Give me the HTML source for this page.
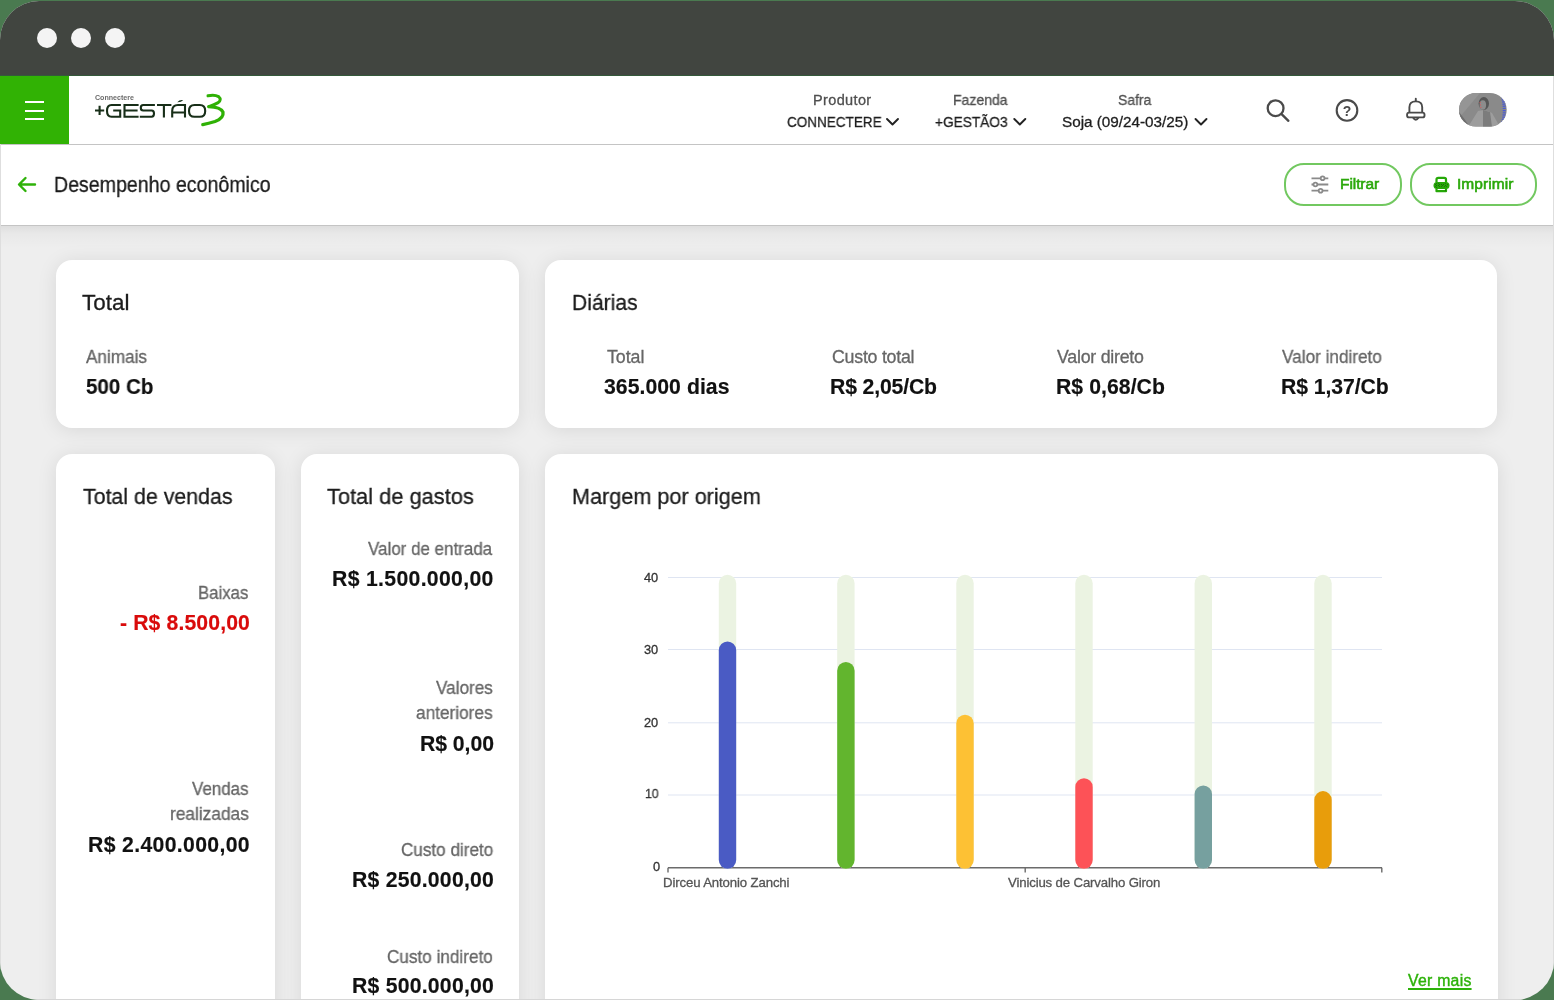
<!DOCTYPE html>
<html><head><meta charset="utf-8">
<style>
html,body{margin:0;padding:0;width:1554px;height:1000px;overflow:hidden;background:#4a7a50;}
body{position:relative;font-family:"Liberation Sans",sans-serif;}
#frame{position:absolute;left:0;top:1px;width:1554px;height:999px;border-radius:39px;overflow:hidden;background:#eeeeee;}
#inner{position:absolute;left:0;top:-1px;width:1554px;height:1000px;}
#topbar{position:absolute;left:0;top:0;width:1554px;height:76px;background:#414540;}
.dot{position:absolute;width:20px;height:20px;border-radius:50%;background:#f4f4f4;top:28px;}
#header{position:absolute;left:0;top:76px;width:1554px;height:68px;background:#ffffff;border-bottom:1px solid #c4c4c4;}
#menu{position:absolute;left:0;top:76px;width:69px;height:68px;background:#31b204;}
.hb{position:absolute;left:25px;width:19px;height:2px;background:#fff;}
#sub{position:absolute;left:0;top:145px;width:1554px;height:80px;background:#fff;border-bottom:1px solid #c4c4c4;}
.card{position:absolute;background:#fff;border-radius:16px;box-shadow:0 2px 20px rgba(0,0,0,0.095);}
.btn{position:absolute;height:39px;border:2px solid #72c860;border-radius:20px;background:#fff;}
.tx{position:absolute;white-space:nowrap;font-family:"Liberation Sans",sans-serif;will-change:transform;}
svg{position:absolute;left:0;top:0;will-change:transform;}
</style></head>
<body>
<div id="frame"><div id="inner">
  <div id="topbar"></div>
  <div class="dot" style="left:37px"></div>
  <div class="dot" style="left:71px"></div>
  <div class="dot" style="left:105px"></div>
  <div style="position:absolute;left:0;top:75px;width:1554px;height:1px;background:#34593a"></div>
  <div id="header"></div>
  <div id="menu">
    <div class="hb" style="top:25px"></div>
    <div class="hb" style="top:34px"></div>
    <div class="hb" style="top:42px"></div>
  </div>
  <div style="position:absolute;left:0;top:226px;width:1554px;height:22px;background:linear-gradient(rgba(0,0,0,0.065),rgba(0,0,0,0.025) 35%,rgba(0,0,0,0))"></div>
  <div id="sub"></div>
  <div class="btn" style="left:1284px;top:163px;width:114px;"></div>
  <div class="btn" style="left:1410px;top:163px;width:123px;"></div>

  <div class="card" style="left:56px;top:260px;width:463px;height:168px"></div>
  <div class="card" style="left:545px;top:260px;width:952px;height:168px"></div>
  <div class="card" style="left:56px;top:454px;width:219px;height:600px"></div>
  <div class="card" style="left:301px;top:454px;width:218px;height:600px"></div>
  <div class="card" style="left:545px;top:454px;width:953px;height:600px"></div>
  <div style="position:absolute;left:0;top:144px;width:1px;height:856px;background:#dedede"></div>
  <div style="position:absolute;left:1553px;top:76px;width:1px;height:924px;background:#dedede"></div>
  <div style="position:absolute;left:0;top:999px;width:1554px;height:1px;background:#d6d6d6"></div>
</div></div>

<!-- page-coordinate svg overlay -->
<svg width="1554" height="1000" viewBox="0 0 1554 1000">
  <!-- logo -->
  <g fill="none" stroke="#172e18" stroke-width="2.1" stroke-linecap="butt">
    <path d="M95,110.5 H104.2 M99.6,105.8 V115"/>
    <path d="M120.9,105 H111.5 Q107,105 107,110.8 Q107,116.8 111.5,116.8 H120.2 V110.5 H113.2"/>
    <path d="M138.6,105 H124.5 V116.8 H138.6 M124.5,110.5 H137.6"/>
    <path d="M154.9,105 H143.2 Q140.8,105 140.8,107.7 Q140.8,110.5 143.2,110.5 H151.6 Q154,110.5 154,113.6 Q154,116.8 151.6,116.8 H139.8"/>
    <path d="M157,105 H171.4 M163.9,105 V117.6"/>
    <path d="M172.2,117.6 V111 Q172.2,105 178,105 H185 V117.6 M172.2,112.5 H185"/>
    <path d="M194.5,105 H199.8 Q205.2,105 205.2,110.9 Q205.2,116.8 199.8,116.8 H194.5 Q189,116.8 189,110.9 Q189,105 194.5,105 Z"/>
  </g>
  <path d="M177.3,102.2 Q179.5,99.6 183.2,100.2 Q181,102.4 177.3,102.2 Z" fill="#15301a"/>
  <g fill="none" stroke="#2fb105" stroke-linecap="round">
    <path d="M208,95.8 Q214.5,94.3 218.6,96.6 Q222,99.6 218.2,102.6 Q213.5,105.2 208.8,106.6" stroke-width="3"/>
    <path d="M208.8,106.6 Q221,107 223,112.2 Q224,118 215,121.5 Q208.5,123.6 202.8,124.6" stroke-width="3.3"/>
  </g>
  <text x="95" y="100.2" font-family="Liberation Sans" font-weight="700" font-size="7.2" fill="#6a6a6a" textLength="39" lengthAdjust="spacingAndGlyphs">Connectere</text>

  <!-- chevrons -->
  <g fill="none" stroke="#222" stroke-width="1.9" stroke-linecap="round" stroke-linejoin="round">
    <path d="M887,119 L892.5,124.5 L898,119"/>
    <path d="M1014.3,119 L1019.8,124.5 L1025.3,119"/>
    <path d="M1195.5,119 L1201,124.5 L1206.5,119"/>
  </g>
  <!-- search -->
  <g fill="none" stroke="#4a4a4a" stroke-width="2.3" stroke-linecap="round">
    <circle cx="1275.6" cy="108.2" r="7.9"/>
    <path d="M1281.6,114.2 L1288.4,120.8"/>
  </g>
  <!-- help -->
  <circle cx="1347" cy="110.4" r="10.3" fill="none" stroke="#4a4a4a" stroke-width="2.1"/>
  <text x="1347" y="115.6" text-anchor="middle" font-family="Liberation Sans" font-weight="700" font-size="14" fill="#4a4a4a">?</text>
  <!-- bell -->
  <g fill="none" stroke="#4a4a4a" stroke-width="1.9" stroke-linejoin="round">
    <path d="M1409.4,112.6 V107.2 Q1409.4,101.4 1415.8,101.4 Q1422.2,101.4 1422.2,107.2 V112.6"/>
    <rect x="1407.1" y="112.6" width="17.4" height="4.8" rx="2"/>
    <path d="M1413,117.6 Q1415.8,122 1418.6,117.6"/>
  </g>
  <path d="M1415.8,98.8 V101" stroke="#4a4a4a" stroke-width="1.9" stroke-linecap="round"/>
  <!-- avatar -->
  <defs><clipPath id="avc"><rect x="1459" y="93" width="47.7" height="33.5" rx="16.75"/></clipPath></defs>
  <g clip-path="url(#avc)">
    <rect x="1459" y="93" width="48" height="34" fill="#8a8a8a"/>
    <path d="M1459,100 L1472,93 L1480,93 L1459,118 Z" fill="#959595"/>
    <path d="M1459,112 Q1464,118 1470,127 L1459,127 Z" fill="#6e6e6e"/>
    <path d="M1468,127 L1478,111 Q1486,109 1492,113 L1500,127 Z" fill="#9d9d9d"/>
    <path d="M1483,110 L1490,112 L1492,127 L1483,127 Z" fill="#7c7c7c"/>
    <ellipse cx="1483.8" cy="103.5" rx="5.2" ry="6.5" fill="#565656"/>
    <ellipse cx="1482.8" cy="105" rx="3.3" ry="4.8" fill="#8c8c8c"/>
    <path d="M1480,102 L1481,108" stroke="#e25050" stroke-width="1" stroke-dasharray="1 1.5"/>
    <path d="M1502.5,97 Q1506,110 1502.5,123" stroke="#4a5ad8" stroke-width="3" fill="none" stroke-dasharray="1.2 1"/>
  </g>
  <!-- back arrow -->
  <g fill="none" stroke="#2fb20a" stroke-width="2.4" stroke-linecap="round" stroke-linejoin="round">
    <path d="M35,184.5 H19.5 M25.5,178 L19,184.5 L25.5,191"/>
  </g>
  <!-- filter icon -->
  <g stroke="#8a8a8a" stroke-width="1.8" fill="#fff">
    <path d="M1311.5,178.3 H1328.3 M1311.5,184.5 H1328.3 M1311.5,190.7 H1328.3" fill="none"/>
    <circle cx="1322.6" cy="178.3" r="1.9"/>
    <circle cx="1315.4" cy="184.5" r="1.9"/>
    <circle cx="1320.6" cy="190.7" r="1.9"/>
  </g>
  <!-- print icon -->
  <g fill="none" stroke="#26a808" stroke-width="2.2" stroke-linejoin="round">
    <path d="M1436.5,182.5 V179.5 Q1436.5,177.8 1438.3,177.8 H1444.3 Q1446,177.8 1446,179.5 V182.5"/>
    <path d="M1436.5,188.5 V191.2 H1446 V188.5"/>
  </g>
  <rect x="1433.5" y="182" width="16" height="7" rx="3.5" fill="#26a808"/>
  <circle cx="1436.44" cy="183.30" r="0.42" fill="#102a0c"/><circle cx="1438.39" cy="183.30" r="0.42" fill="#102a0c"/><circle cx="1445.40" cy="183.30" r="0.42" fill="#102a0c"/><circle cx="1435.40" cy="184.47" r="0.42" fill="#102a0c"/><circle cx="1439.43" cy="184.47" r="0.42" fill="#102a0c"/><circle cx="1441.51" cy="184.47" r="0.42" fill="#102a0c"/><circle cx="1443.45" cy="184.47" r="0.42" fill="#102a0c"/><circle cx="1447.48" cy="184.47" r="0.42" fill="#102a0c"/><circle cx="1436.44" cy="185.51" r="0.42" fill="#102a0c"/><circle cx="1438.39" cy="185.51" r="0.42" fill="#102a0c"/><circle cx="1442.42" cy="185.51" r="0.42" fill="#102a0c"/><circle cx="1445.40" cy="185.51" r="0.42" fill="#102a0c"/><circle cx="1435.40" cy="186.55" r="0.42" fill="#102a0c"/><circle cx="1439.43" cy="186.55" r="0.42" fill="#102a0c"/><circle cx="1441.51" cy="186.55" r="0.42" fill="#102a0c"/><circle cx="1444.36" cy="186.55" r="0.42" fill="#102a0c"/><circle cx="1446.44" cy="186.55" r="0.42" fill="#102a0c"/><circle cx="1436.44" cy="187.58" r="0.42" fill="#102a0c"/><circle cx="1445.40" cy="190.44" r="0.42" fill="#102a0c"/>

  <!-- chart gridlines -->
  <g stroke="#dfe5f2" stroke-width="1">
    <path d="M668,577.5 H1382 M668,649.5 H1382 M668,722.8 H1382 M668,795 H1382"/>
  </g>
  <g stroke="#6b6b6b" stroke-width="1.4" fill="none">
    <path d="M668,867.7 H1382 M668,867.7 V872.5 M1025.2,867.7 V872.5 M1381.8,867.7 V872.5"/>
  </g>
  <!-- bars -->
  <g stroke-linecap="round" stroke-width="17.4" fill="none">
    <path d="M727.5,583.4 V860" stroke="#ebf3e2"/>
    <path d="M845.9,583.4 V860" stroke="#ebf3e2"/>
    <path d="M965,583.4 V860" stroke="#ebf3e2"/>
    <path d="M1084,583.4 V860" stroke="#ebf3e2"/>
    <path d="M1203.3,583.4 V860" stroke="#ebf3e2"/>
    <path d="M1323,583.4 V860" stroke="#ebf3e2"/>
    <path d="M727.5,650.2 V860" stroke="#4a5bc4"/>
    <path d="M845.9,670.7 V860" stroke="#62b52e"/>
    <path d="M965,723.4 V860" stroke="#fdc134"/>
    <path d="M1084,786.9 V860" stroke="#fd5257"/>
    <path d="M1203.3,794.1 V860" stroke="#76a09f"/>
    <path d="M1323,799.8 V860" stroke="#e89d0b"/>
  </g>
</svg>
<div class="tx" style="left:54.26px;top:171.20px;font-size:22.4px;line-height:27px;font-weight:400;color:#1a1a1a;transform:scaleX(0.8745);transform-origin:0 0;-webkit-text-stroke:0.3px #1a1a1a;">Desempenho econômico</div>
<div class="tx" style="left:813.45px;top:91.70px;font-size:14.5px;line-height:17px;font-weight:400;color:#4f4f4f;letter-spacing:0.359px;-webkit-text-stroke:0.3px #4f4f4f;">Produtor</div>
<div class="tx" style="left:786.63px;top:112.60px;font-size:15.3px;line-height:18px;font-weight:400;color:#1e1e1e;transform:scaleX(0.8835);transform-origin:0 0;-webkit-text-stroke:0.3px #1e1e1e;">CONNECTERE</div>
<div class="tx" style="left:953.08px;top:91.70px;font-size:14.5px;line-height:17px;font-weight:400;color:#4f4f4f;transform:scaleX(0.9671);transform-origin:0 0;-webkit-text-stroke:0.3px #4f4f4f;">Fazenda</div>
<div class="tx" style="left:935.13px;top:112.60px;font-size:15.3px;line-height:18px;font-weight:400;color:#1e1e1e;transform:scaleX(0.8940);transform-origin:0 0;-webkit-text-stroke:0.3px #1e1e1e;">+GESTÃO3</div>
<div class="tx" style="left:1117.94px;top:91.70px;font-size:14.5px;line-height:17px;font-weight:400;color:#4f4f4f;transform:scaleX(0.9612);transform-origin:0 0;-webkit-text-stroke:0.3px #4f4f4f;">Safra</div>
<div class="tx" style="left:1062.35px;top:112.60px;font-size:15.3px;line-height:18px;font-weight:400;color:#1e1e1e;letter-spacing:-0.018px;-webkit-text-stroke:0.3px #1e1e1e;">Soja (09/24-03/25)</div>
<div class="tx" style="left:1340.20px;top:174.10px;font-size:15.5px;line-height:19px;font-weight:400;color:#2aa80a;letter-spacing:-0.074px;-webkit-text-stroke:0.4px #2aa80a;-webkit-text-stroke:0.6px #2aa80a;">Filtrar</div>
<div class="tx" style="left:1457.40px;top:174.10px;font-size:15.5px;line-height:19px;font-weight:400;color:#2aa80a;letter-spacing:0.057px;-webkit-text-stroke:0.4px #2aa80a;-webkit-text-stroke:0.6px #2aa80a;">Imprimir</div>
<div class="tx" style="left:82.25px;top:288.70px;font-size:22.4px;line-height:27px;font-weight:400;color:#1c1c1c;letter-spacing:0.070px;-webkit-text-stroke:0.3px #1c1c1c;">Total</div>
<div class="tx" style="left:85.74px;top:346.50px;font-size:17.8px;line-height:21px;font-weight:400;color:#666;transform:scaleX(0.9646);transform-origin:0 0;-webkit-text-stroke:0.3px #666;">Animais</div>
<div class="tx" style="left:86.07px;top:373.60px;font-size:21.2px;line-height:25px;font-weight:700;color:#111;transform:scaleX(0.9700);transform-origin:0 0;-webkit-text-stroke:0.15px #111;">500 Cb</div>
<div class="tx" style="left:571.50px;top:288.70px;font-size:22.4px;line-height:27px;font-weight:400;color:#1c1c1c;transform:scaleX(0.9421);transform-origin:0 0;-webkit-text-stroke:0.3px #1c1c1c;">Diárias</div>
<div class="tx" style="left:606.75px;top:346.50px;font-size:17.8px;line-height:21px;font-weight:400;color:#666;letter-spacing:-0.052px;-webkit-text-stroke:0.3px #666;">Total</div>
<div class="tx" style="left:604.18px;top:373.60px;font-size:21.2px;line-height:25px;font-weight:700;color:#111;letter-spacing:0.051px;-webkit-text-stroke:0.15px #111;">365.000 dias</div>
<div class="tx" style="left:831.75px;top:346.50px;font-size:17.8px;line-height:21px;font-weight:400;color:#666;letter-spacing:-0.245px;-webkit-text-stroke:0.3px #666;">Custo total</div>
<div class="tx" style="left:830.08px;top:373.60px;font-size:21.2px;line-height:25px;font-weight:700;color:#111;letter-spacing:-0.149px;-webkit-text-stroke:0.15px #111;">R$ 2,05/Cb</div>
<div class="tx" style="left:1056.75px;top:346.50px;font-size:17.8px;line-height:21px;font-weight:400;color:#666;letter-spacing:-0.247px;-webkit-text-stroke:0.3px #666;">Valor direto</div>
<div class="tx" style="left:1055.67px;top:373.60px;font-size:21.2px;line-height:25px;font-weight:700;color:#111;letter-spacing:0.062px;-webkit-text-stroke:0.15px #111;">R$ 0,68/Cb</div>
<div class="tx" style="left:1282.24px;top:346.50px;font-size:17.8px;line-height:21px;font-weight:400;color:#666;transform:scaleX(0.9657);transform-origin:0 0;-webkit-text-stroke:0.3px #666;">Valor indireto</div>
<div class="tx" style="left:1280.67px;top:373.60px;font-size:21.2px;line-height:25px;font-weight:700;color:#111;letter-spacing:-0.072px;-webkit-text-stroke:0.15px #111;">R$ 1,37/Cb</div>
<div class="tx" style="left:83.14px;top:482.80px;font-size:22.4px;line-height:27px;font-weight:400;color:#1c1c1c;transform:scaleX(0.9532);transform-origin:0 0;-webkit-text-stroke:0.3px #1c1c1c;">Total de vendas</div>
<div class="tx" style="left:197.80px;top:582.70px;font-size:17.8px;line-height:21px;font-weight:400;color:#666;transform:scaleX(0.9436);transform-origin:0 0;-webkit-text-stroke:0.3px #666;">Baixas</div>
<div class="tx" style="left:119.88px;top:609.80px;font-size:21.2px;line-height:25px;font-weight:700;color:#d90b0b;letter-spacing:0.121px;-webkit-text-stroke:0.15px #d90b0b;">- R$ 8.500,00</div>
<div class="tx" style="left:191.84px;top:778.70px;font-size:17.8px;line-height:21px;font-weight:400;color:#666;transform:scaleX(0.9525);transform-origin:0 0;-webkit-text-stroke:0.3px #666;">Vendas</div>
<div class="tx" style="left:169.57px;top:803.50px;font-size:17.8px;line-height:21px;font-weight:400;color:#666;transform:scaleX(0.9719);transform-origin:0 0;-webkit-text-stroke:0.3px #666;">realizadas</div>
<div class="tx" style="left:88.08px;top:832.00px;font-size:21.2px;line-height:25px;font-weight:700;color:#111;letter-spacing:0.354px;-webkit-text-stroke:0.15px #111;">R$ 2.400.000,00</div>
<div class="tx" style="left:327.05px;top:483.00px;font-size:22.4px;line-height:27px;font-weight:400;color:#1c1c1c;transform:scaleX(0.9747);transform-origin:0 0;-webkit-text-stroke:0.3px #1c1c1c;">Total de gastos</div>
<div class="tx" style="left:368.14px;top:538.70px;font-size:17.8px;line-height:21px;font-weight:400;color:#666;transform:scaleX(0.9535);transform-origin:0 0;-webkit-text-stroke:0.3px #666;">Valor de entrada</div>
<div class="tx" style="left:331.88px;top:566.10px;font-size:21.2px;line-height:25px;font-weight:700;color:#111;letter-spacing:0.332px;-webkit-text-stroke:0.15px #111;">R$ 1.500.000,00</div>
<div class="tx" style="left:436.14px;top:677.60px;font-size:17.8px;line-height:21px;font-weight:400;color:#666;transform:scaleX(0.9633);transform-origin:0 0;-webkit-text-stroke:0.3px #666;">Valores</div>
<div class="tx" style="left:416.35px;top:703.00px;font-size:17.8px;line-height:21px;font-weight:400;color:#666;transform:scaleX(0.9688);transform-origin:0 0;-webkit-text-stroke:0.3px #666;">anteriores</div>
<div class="tx" style="left:419.97px;top:730.60px;font-size:21.2px;line-height:25px;font-weight:700;color:#111;letter-spacing:-0.046px;-webkit-text-stroke:0.15px #111;">R$ 0,00</div>
<div class="tx" style="left:400.54px;top:839.80px;font-size:17.8px;line-height:21px;font-weight:400;color:#666;transform:scaleX(0.9618);transform-origin:0 0;-webkit-text-stroke:0.3px #666;">Custo direto</div>
<div class="tx" style="left:351.88px;top:867.00px;font-size:21.2px;line-height:25px;font-weight:700;color:#111;letter-spacing:0.235px;-webkit-text-stroke:0.15px #111;">R$ 250.000,00</div>
<div class="tx" style="left:386.94px;top:946.60px;font-size:17.8px;line-height:21px;font-weight:400;color:#666;transform:scaleX(0.9644);transform-origin:0 0;-webkit-text-stroke:0.3px #666;">Custo indireto</div>
<div class="tx" style="left:351.88px;top:973.20px;font-size:21.2px;line-height:25px;font-weight:700;color:#111;letter-spacing:0.235px;-webkit-text-stroke:0.15px #111;">R$ 500.000,00</div>
<div class="tx" style="left:571.68px;top:483.00px;font-size:22.4px;line-height:27px;font-weight:400;color:#1c1c1c;transform:scaleX(0.9665);transform-origin:0 0;-webkit-text-stroke:0.3px #1c1c1c;">Margem por origem</div>
<div class="tx" style="left:644.35px;top:569.60px;font-size:12.8px;line-height:15px;font-weight:400;color:#333;letter-spacing:-0.017px;-webkit-text-stroke:0.3px #333;">40</div>
<div class="tx" style="left:644.35px;top:641.70px;font-size:12.8px;line-height:15px;font-weight:400;color:#333;letter-spacing:-0.017px;-webkit-text-stroke:0.3px #333;">30</div>
<div class="tx" style="left:644.35px;top:714.60px;font-size:12.8px;line-height:15px;font-weight:400;color:#333;letter-spacing:-0.017px;-webkit-text-stroke:0.3px #333;">20</div>
<div class="tx" style="left:644.84px;top:786.40px;font-size:12.8px;line-height:15px;font-weight:400;color:#333;transform:scaleX(0.9641);transform-origin:0 0;-webkit-text-stroke:0.3px #333;">10</div>
<div class="tx" style="left:652.55px;top:859.00px;font-size:12.8px;line-height:15px;font-weight:400;color:#333;letter-spacing:0.000px;-webkit-text-stroke:0.3px #333;">0</div>
<div class="tx" style="left:663.45px;top:874.60px;font-size:13.2px;line-height:16px;font-weight:400;color:#555;letter-spacing:-0.126px;-webkit-text-stroke:0.3px #555;">Dirceu Antonio Zanchi</div>
<div class="tx" style="left:1008.35px;top:874.60px;font-size:13.2px;line-height:16px;font-weight:400;color:#555;letter-spacing:-0.142px;-webkit-text-stroke:0.3px #555;">Vinicius de Carvalho Giron</div>
<div class="tx" style="left:1408.40px;top:971.40px;font-size:15.8px;line-height:19px;font-weight:400;color:#2db20a;letter-spacing:0.264px;-webkit-text-stroke:0.4px #2db20a;text-decoration:underline;text-underline-offset:2px;text-decoration-thickness:1.5px;-webkit-text-stroke:0.4px #2db20a;">Ver mais</div>
</body></html>
